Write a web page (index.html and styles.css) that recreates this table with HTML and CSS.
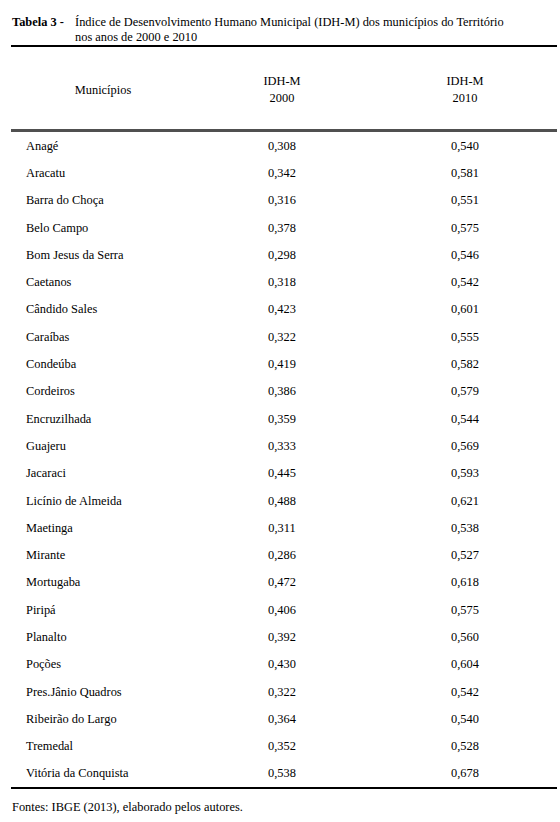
FILE: index.html
```html
<!DOCTYPE html>
<html lang="pt">
<head>
<meta charset="utf-8">
<link rel="stylesheet" href="styles.css">
</head>
<body>
<div class="page">
  <div class="caption">
    <span class="label">Tabela 3 -</span>
    <span class="title">Índice de Desenvolvimento Humano Municipal (IDH-M) dos municípios do Território nos anos de 2000 e 2010</span>
  </div>
  <div class="table">
    <div class="head">
      <div class="c1">Municípios</div>
      <div class="c2">IDH-M<br>2000</div>
      <div class="c3">IDH-M<br>2010</div>
    </div>
    <div class="rows">
      <div class="row"><div class="c1">Anagé</div><div class="c2">0,308</div><div class="c3">0,540</div></div>
      <div class="row"><div class="c1">Aracatu</div><div class="c2">0,342</div><div class="c3">0,581</div></div>
      <div class="row"><div class="c1">Barra do Choça</div><div class="c2">0,316</div><div class="c3">0,551</div></div>
      <div class="row"><div class="c1">Belo Campo</div><div class="c2">0,378</div><div class="c3">0,575</div></div>
      <div class="row"><div class="c1">Bom Jesus da Serra</div><div class="c2">0,298</div><div class="c3">0,546</div></div>
      <div class="row"><div class="c1">Caetanos</div><div class="c2">0,318</div><div class="c3">0,542</div></div>
      <div class="row"><div class="c1">Cândido Sales</div><div class="c2">0,423</div><div class="c3">0,601</div></div>
      <div class="row"><div class="c1">Caraíbas</div><div class="c2">0,322</div><div class="c3">0,555</div></div>
      <div class="row"><div class="c1">Condeúba</div><div class="c2">0,419</div><div class="c3">0,582</div></div>
      <div class="row"><div class="c1">Cordeiros</div><div class="c2">0,386</div><div class="c3">0,579</div></div>
      <div class="row"><div class="c1">Encruzilhada</div><div class="c2">0,359</div><div class="c3">0,544</div></div>
      <div class="row"><div class="c1">Guajeru</div><div class="c2">0,333</div><div class="c3">0,569</div></div>
      <div class="row"><div class="c1">Jacaraci</div><div class="c2">0,445</div><div class="c3">0,593</div></div>
      <div class="row"><div class="c1">Licínio de Almeida</div><div class="c2">0,488</div><div class="c3">0,621</div></div>
      <div class="row"><div class="c1">Maetinga</div><div class="c2">0,311</div><div class="c3">0,538</div></div>
      <div class="row"><div class="c1">Mirante</div><div class="c2">0,286</div><div class="c3">0,527</div></div>
      <div class="row"><div class="c1">Mortugaba</div><div class="c2">0,472</div><div class="c3">0,618</div></div>
      <div class="row"><div class="c1">Piripá</div><div class="c2">0,406</div><div class="c3">0,575</div></div>
      <div class="row"><div class="c1">Planalto</div><div class="c2">0,392</div><div class="c3">0,560</div></div>
      <div class="row"><div class="c1">Poções</div><div class="c2">0,430</div><div class="c3">0,604</div></div>
      <div class="row"><div class="c1">Pres.Jânio Quadros</div><div class="c2">0,322</div><div class="c3">0,542</div></div>
      <div class="row"><div class="c1">Ribeirão do Largo</div><div class="c2">0,364</div><div class="c3">0,540</div></div>
      <div class="row"><div class="c1">Tremedal</div><div class="c2">0,352</div><div class="c3">0,528</div></div>
      <div class="row"><div class="c1">Vitória da Conquista</div><div class="c2">0,538</div><div class="c3">0,678</div></div>
    </div>
  </div>
  <div class="source">Fontes: IBGE (2013), elaborado pelos autores.</div>
</div>
</body>
</html>
```
FILE: styles.css
```css
html, body {
  margin: 0;
  padding: 0;
  background: #fff;
}
.page {
  font-family: "Liberation Serif", "Times New Roman", serif;
  font-size: 12.4px;
  line-height: 14px;
  color: #000;
  padding: 15px 3px 0 11px;
}
.caption {
  display: flex;
  line-height: 15px;
  padding: 0 0 0 1px;
  border-bottom: 2px solid #000;
}
.label {
  font-weight: bold;
  flex: 0 0 63px;
}
.title {
  flex: 1;
  padding-right: 45px;
}
.table {
  border-bottom: 2px solid #000;
}
.head {
  display: grid;
  grid-template-columns: 194px 154px 1fr;
  align-items: center;
  height: 85px;
  padding-top: 4px;
  line-height: 17px;
  border-bottom: 3px solid #505050;
  box-sizing: border-box;
}
.head .c1, .head .c2, .head .c3 {
  text-align: center;
}
.head .c1 {
  padding-right: 10px;
}
.head .c3 {
  padding-left: 14px;
}
.row {
  display: grid;
  grid-template-columns: 194px 154px 1fr;
  align-items: center;
  height: 27.3px;
}
.row .c1 {
  padding-left: 15px;
}
.row .c2, .row .c3 {
  text-align: center;
}
.row .c3 {
  padding-left: 14px;
}
.source {
  padding: 11px 0 0 1px;
}
```
